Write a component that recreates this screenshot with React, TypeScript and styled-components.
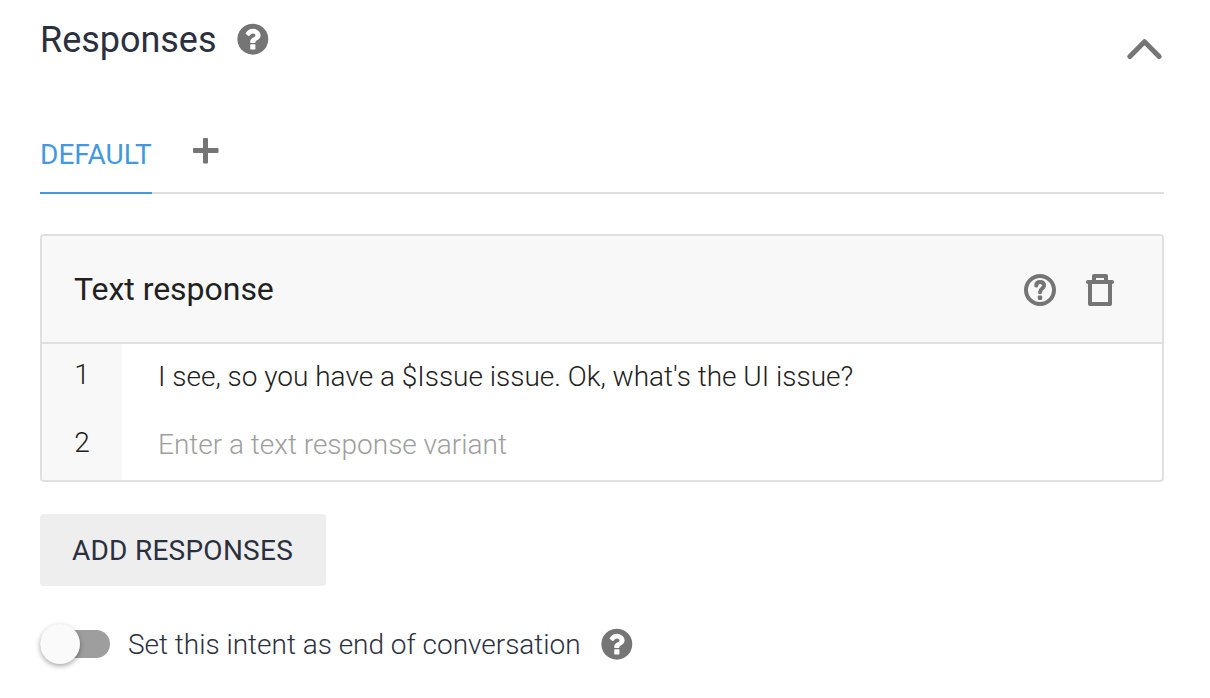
import React from 'react';
import styled, { createGlobalStyle } from 'styled-components';

const Global = createGlobalStyle`
  * { box-sizing: border-box; }
  body { margin: 0; background: #fff; font-family: Roboto, sans-serif; color: #2b303f; }
`;

const Page = styled.main`
  width: 1164px;
  height: 698px;
  padding-left: 40px;
  overflow: hidden;
`;

const Header = styled.header`
  display: flex;
  align-items: flex-start;
  height: 120px;
`;

const Heading = styled.h2`
  margin: 19px 21px 0 0;
  font-size: 36px;
  line-height: 42px;
  font-weight: 400;
  letter-spacing: -0.03px;
  white-space: nowrap;
  width: 176px;
`;

const HeadingHelp = styled.div`
  margin-top: 23px;
`;

const Icon = styled.svg`
  display: block;
  flex: none;
`;

const Collapse = styled.div`
  margin: 37px 1px 0 auto;
`;

const Tabs = styled.nav`
  display: flex;
  height: 74px;
  box-shadow: inset 0 -2px #dfdfdf;
`;

const Tab = styled.div`
  width: 112px;
  border-bottom: 2px solid #4299e1;
  color: #4299e1;
  font-size: 28px;
  line-height: 69px;
  white-space: nowrap;
`;

const AddTab = styled.div`
  margin: 18px 0 0 41px;
`;

const Card = styled.section`
  margin-top: 40px;
  height: 248px;
  border: 2px solid #e0e0e0;
  border-radius: 4px;
  overflow: hidden;
`;

const CardHeader = styled.div`
  display: flex;
  align-items: center;
  height: 108px;
  padding: 0 44px 0 32px;
  border-bottom: 2px solid #e0e0e0;
  background: #f8f8f8;
`;

const CardTitle = styled.h3`
  margin: 0 auto 0 0;
  color: #212121;
  font-size: 32px;
  font-weight: 400;
  letter-spacing: -0.03px;
`;

const CardActions = styled.div`
  display: flex;
  align-items: center;
  gap: 26px;
  padding-top: 2px;
`;

const Row = styled.div`
  display: flex;
  height: 68px;
  font-size: 28px;
  line-height: 66px;
`;

const Index = styled.div`
  width: 80px;
  background: #f8f8f8;
  color: #212121;
  text-align: center;
  font-weight: 300;
  line-height: 62px;
`;

const Variant = styled.div<{ $empty?: boolean }>`
  padding-left: 36px;
  color: ${p => (p.$empty ? '#9e9e9e' : '#212121')};
  font-weight: 300;
  letter-spacing: -0.01px;
`;

const AddButton = styled.button`
  display: block;
  margin-top: 32px;
  width: 286px;
  height: 72px;
  padding: 1px 1px 0 0;
  border: 0;
  border-radius: 4px;
  background: #eee;
  color: #2b303f;
  font: 400 28px/71px Roboto, sans-serif;
  letter-spacing: 0.25px;
`;

const Setting = styled.div`
  display: flex;
  align-items: center;
  height: 40px;
  margin-top: 38px;
  font-size: 28px;
  font-weight: 300;
`;

const Switch = styled.div`
  display: flex;
  align-items: center;
  width: 70px;
  height: 28px;
  border-radius: 14px;
  background: #9e9e9e;
`;

const Thumb = styled.div`
  width: 40px;
  height: 40px;
  border-radius: 50%;
  background: #fafafa;
  box-shadow: 0 2px 5px rgba(0, 0, 0, 0.35);
`;

const SettingLabel = styled.span`
  width: 452px;
  margin: 0 21px 0 18px;
  white-space: nowrap;
  letter-spacing: -0.02px;
`;

const SettingHelp = styled.div`
  padding-bottom: 1px;
`;

const HelpIcon = () => (
  <Icon width="32" height="32" viewBox="-16 96 1586 1586" fill="#757575">
    <path d="M896 1376v-192q0-14-9-23t-23-9h-192q-14 0-23 9t-9 23v192q0 14 9 23t23 9h192q14 0 23-9t9-23zm256-672q0-88-55.5-163t-138.5-116-170-41q-243 0-371 213-15 24 8 42l132 100q7 6 19 6 16 0 25-12 53-68 86-92 34-24 86-24 48 0 85.5 26t37.5 59q0 38-20 57t-68 45q-63 28-115.5 86.5t-52.5 125.5v36q0 14 9 23t23 9h192q14 0 23-9t9-23q0-19 21.5-49.5t54.5-49.5q32-18 49-28.5t46-35 44.5-48 28-60.5 12.5-81zm384 192q0 209-103 385.5t-279.5 279.5-385.5 103-385.5-103-279.5-279.5-103-385.5 103-385.5 279.5-279.5 385.5-103 385.5 103 279.5 279.5 103 385.5z" />
  </Icon>
);

const HelpOutlineIcon = () => (
  <Icon width="32" height="32" viewBox="0 0 32 32" fill="none" stroke="#757575" strokeWidth="4">
    <circle cx="16" cy="16" r="14" />
    <path d="M12.2 11.6C12.3 9.2 13.8 8 16.1 8C18.6 8 20.1 9.4 20.1 11.6C20.1 14.6 16 14.6 16 18.2" strokeLinecap="round" />
    <rect x="13.8" y="21.6" width="4.4" height="4.4" rx="1.2" fill="#757575" stroke="none" />
  </Icon>
);

const TrashIcon = () => (
  <Icon width="36" height="32" viewBox="0 0 36 32" fill="none" stroke="#757575" strokeWidth="4" strokeLinejoin="round">
    <path d="M8 8V30H28V8" />
    <path d="M6 8H30" strokeLinecap="round" />
    <path d="M12 8V2H24V8" />
  </Icon>
);

const variants = [
  { text: "I see, so you have a $Issue issue. Ok, what's the UI issue?" },
  { text: 'Enter a text response variant', empty: true },
];

export default function App() {
  return (
    <Page>
      <Global />
      <Header>
        <Heading>Responses</Heading>
        <HeadingHelp><HelpIcon /></HeadingHelp>
        <Collapse>
          <Icon width="36" height="24" viewBox="0 0 36 24">
            <path d="M2.9 19.5L17.5 4.7L32.1 19.5" fill="none" stroke="#757575" strokeWidth="5" strokeLinecap="round" strokeLinejoin="round" />
          </Icon>
        </Collapse>
      </Header>
      <Tabs>
        <Tab>DEFAULT</Tab>
        <AddTab>
          <Icon width="26" height="26" viewBox="0 0 26 26" fill="#757575">
            <rect x="10" width="5" height="25.5" rx="1" />
            <rect y="10" width="25.5" height="5" rx="1" />
          </Icon>
        </AddTab>
      </Tabs>
      <Card>
        <CardHeader>
          <CardTitle>Text response</CardTitle>
          <CardActions><HelpOutlineIcon /><TrashIcon /></CardActions>
        </CardHeader>
        {variants.map((v, i) => (
          <Row key={i}>
            <Index>{i + 1}</Index>
            <Variant $empty={v.empty}>{v.text}</Variant>
          </Row>
        ))}
      </Card>
      <AddButton>ADD RESPONSES</AddButton>
      <Setting>
        <Switch><Thumb /></Switch>
        <SettingLabel>Set this intent as end of conversation</SettingLabel>
        <SettingHelp><HelpIcon /></SettingHelp>
      </Setting>
    </Page>
  );
}
